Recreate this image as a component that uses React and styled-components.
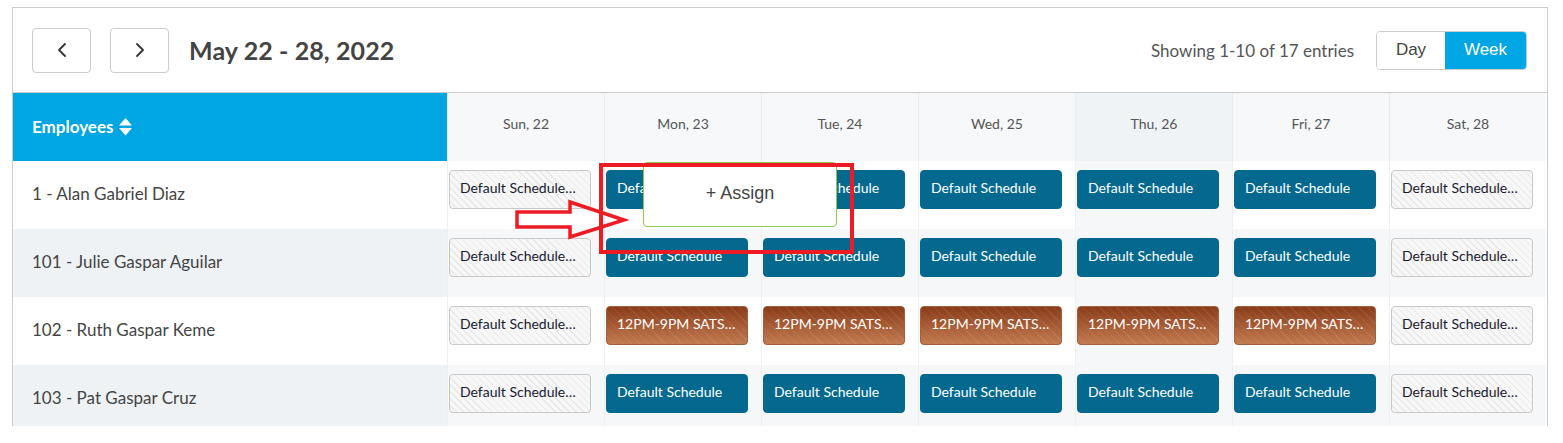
import React from "react";
import styled, { createGlobalStyle, css } from "styled-components";
import { ChevronLeft, ChevronRight } from "lucide-react";

const GlobalStyle = createGlobalStyle`
  html, body {
    margin: 0;
    padding: 0;
    background: #ffffff;
    overflow: hidden;
  }
  body {
    font-family: Lato, "Noto Sans", sans-serif;
    color: #444;
  }
`;

const days = [
  { label: "Sun, 22" },
  { label: "Mon, 23" },
  { label: "Tue, 24" },
  { label: "Wed, 25" },
  { label: "Thu, 26", today: true },
  { label: "Fri, 27" },
  { label: "Sat, 28" },
];

const employees = [
  { name: "1 - Alan Gabriel Diaz", shift: "blue" },
  { name: "101 - Julie Gaspar Aguilar", shift: "blue" },
  { name: "102 - Ruth Gaspar Keme", shift: "brown" },
  { name: "103 - Pat Gaspar Cruz", shift: "blue" },
];

const chipText = {
  off: "Default Schedule…",
  blue: "Default Schedule",
  brown: "12PM-9PM SATS…",
};

const SortIcon = () => (
  <svg width="15" height="20" viewBox="0 0 15 20">
    <path d="M7.5 1 L14 8.5 H1 Z" fill="#fff" />
    <path d="M1 11 H14 L7.5 18.5 Z" fill="#fff" />
  </svg>
);

const App = () => {
  return (
    <Page>
      <GlobalStyle />
      <Panel>
        <Toolbar>
          <NavLeft>
            <NavButton aria-label="Previous week">
              <ChevronLeft size={24} strokeWidth={1.8} />
            </NavButton>
            <NavButton aria-label="Next week">
              <ChevronRight size={24} strokeWidth={1.8} />
            </NavButton>
            <Title>May 22 - 28, 2022</Title>
          </NavLeft>
          <NavRight>
            <Entries>Showing 1-10 of 17 entries</Entries>
            <Toggle>
              <ToggleButton>Day</ToggleButton>
              <ToggleButton active>Week</ToggleButton>
            </Toggle>
          </NavRight>
        </Toolbar>
        <Grid>
          <EmployeesHead>
            Employees <SortIcon />
          </EmployeesHead>
          {days.map((d) => (
            <DayHead key={d.label} today={d.today}>
              {d.label}
            </DayHead>
          ))}
          {employees.map((emp, i) => (
            <React.Fragment key={emp.name}>
              <NameCell striped={i % 2 === 1}>{emp.name}</NameCell>
              {days.map((d, j) => {
                const type = j === 0 || j === 6 ? "off" : emp.shift;
                return (
                  <DayCell key={d.label} striped={i % 2 === 1} today={d.today}>
                    <Chip kind={type}>{chipText[type]}</Chip>
                  </DayCell>
                );
              })}
            </React.Fragment>
          ))}
        </Grid>
      </Panel>

      <AssignPopover>+ Assign</AssignPopover>
      <Highlight />
      <Arrow width="120" height="44" viewBox="0 0 120 44">
        <path
          d="M3 13 H56 V3 L110 21 L56 38 V28 H3 Z"
          fill="none"
          stroke="#ed1c24"
          strokeWidth="3.5"
          strokeLinejoin="miter"
        />
      </Arrow>
    </Page>
  );
};

export default App;

const Page = styled.div`
  position: relative;
  padding: 7px 0 0 12px;
  width: 1563px;
  height: 443px;
  box-sizing: border-box;
`;

const Panel = styled.div`
  width: 1536px;
  height: 419px;
  box-sizing: border-box;
  border: 1px solid #cccccc;
  border-bottom: none;
  overflow: hidden;
`;

const Toolbar = styled.div`
  display: flex;
  align-items: center;
  justify-content: space-between;
  height: 84px;
  padding: 0 20px 0 19px;
  border-bottom: 1px solid #cccccc;
`;

const NavLeft = styled.div`
  display: flex;
  align-items: center;
  gap: 19px;
`;

const NavButton = styled.button`
  display: flex;
  align-items: center;
  justify-content: center;
  width: 59px;
  height: 45px;
  padding: 0;
  background: #fff;
  border: 1px solid #cccccc;
  border-radius: 4px;
  color: #333;
`;

const Title = styled.h1`
  margin: 0 0 0 1px;
  font-size: 25px;
  font-weight: 700;
  color: #444;
  letter-spacing: 0.1px;
`;

const NavRight = styled.div`
  display: flex;
  align-items: center;
  gap: 22px;
`;

const Entries = styled.span`
  font-size: 17px;
  color: #555;
`;

const Toggle = styled.div`
  display: flex;
  border: 1px solid #cccccc;
  border-radius: 4px;
  overflow: hidden;
  height: 37px;
`;

const ToggleButton = styled.button`
  border: none;
  padding: 0;
  font-family: "Liberation Sans", Arial, sans-serif;
  font-size: 17px;
  width: ${(p) => (p.active ? "81px" : "68px")};
  background: ${(p) => (p.active ? "#00a5e3" : "#ffffff")};
  color: ${(p) => (p.active ? "#ffffff" : "#444")};
`;

const Grid = styled.div`
  display: grid;
  grid-template-columns: 434px repeat(7, 157px);
  grid-auto-rows: 68px;
`;

const EmployeesHead = styled.div`
  display: flex;
  align-items: center;
  gap: 4px;
  padding: 0 0 1px 19px;
  background: #00a6e2;
  color: #ffffff;
  font-size: 17px;
  font-weight: 700;
`;

const DayHead = styled.div`
  display: flex;
  align-items: center;
  justify-content: center;
  padding-bottom: 7px;
  border-left: 1px solid #e9ecef;
  background: ${(p) => (p.today ? "#f0f3f6" : "#f7f8fa")};
  font-size: 14px;
  color: #555;
`;

const NameCell = styled.div`
  display: flex;
  align-items: center;
  padding: 0 0 4px 19px;
  font-size: 17px;
  color: #444;
  background: ${(p) => (p.striped ? "#eef2f5" : "#ffffff")};
`;

const DayCell = styled.div`
  border-left: 1px solid #edf0f3;
  padding: 9px 13px 0 1px;
  background: ${(p) => (p.today || p.striped ? "#f5f7f9" : "#ffffff")};
`;

const chipKinds = {
  off: css`
    background-color: #f7f7f7;
    background-image: repeating-linear-gradient(
      45deg,
      transparent 0,
      transparent 4px,
      rgba(0, 0, 0, 0.06) 4px,
      rgba(0, 0, 0, 0.06) 5px
    );
    border: 1px solid #c8c8c8;
    color: #1a1a2e;
  `,
  blue: css`
    background: #05698f;
    border: 1px solid #05698f;
    color: #ffffff;
  `,
  brown: css`
    background-color: #a5542c;
    background-image: repeating-linear-gradient(
        45deg,
        transparent 0,
        transparent 5px,
        rgba(255, 255, 255, 0.08) 5px,
        rgba(255, 255, 255, 0.08) 6px
      ),
      linear-gradient(#8a3c19, #c27a50);
    border: 1px solid #a0603c;
    color: #ffffff;
  `,
};

const Chip = styled.div`
  height: 39px;
  box-sizing: border-box;
  display: flex;
  align-items: center;
  padding: 0 10px 4px;
  border-radius: 4px;
  font-size: 14px;
  white-space: nowrap;
  overflow: hidden;
  ${(p) => chipKinds[p.kind]}
`;

const AssignPopover = styled.div`
  position: absolute;
  left: 643px;
  top: 162px;
  width: 194px;
  height: 65px;
  box-sizing: border-box;
  display: flex;
  align-items: center;
  justify-content: center;
  padding-bottom: 2px;
  background: #ffffff;
  border: 1px solid #8cc94f;
  border-radius: 4px;
  font-family: "Liberation Sans", Arial, sans-serif;
  font-size: 18px;
  color: #444;
`;

const Highlight = styled.div`
  position: absolute;
  left: 599px;
  top: 163px;
  width: 255px;
  height: 91px;
  box-sizing: border-box;
  border: 4px solid #ed1c24;
`;

const Arrow = styled.svg`
  position: absolute;
  left: 514px;
  top: 199px;
`;
